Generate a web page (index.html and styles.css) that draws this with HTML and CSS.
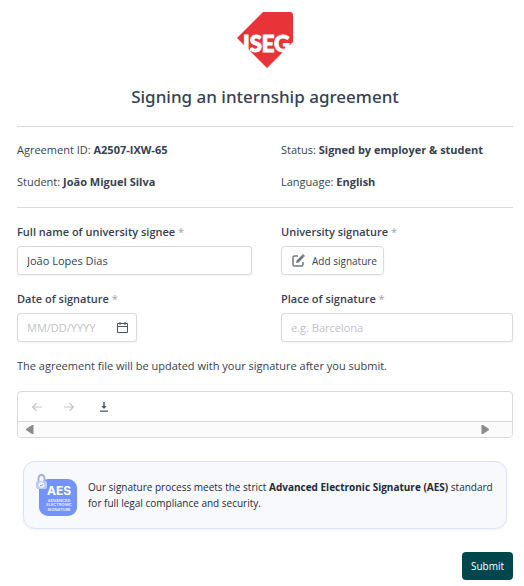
FILE: index.html
```html
<!DOCTYPE html>
<html lang="en">
<head>
<meta charset="UTF-8">
<meta name="viewport" content="width=device-width, initial-scale=1.0">
<title>Signing an internship agreement</title>
<link rel="stylesheet" href="styles.css">
</head>
<body>
    <form class="page">
        <svg class="logo" viewBox="0 0 56 56" role="img" aria-label="ISEG">
            <path d="M26 0H53Q56 0 56 3V30L30 56L0 26Z" fill="#e83338"/>
            <text x="6" y="40" class="logo-text">ISEG</text>
        </svg>
        <h1>Signing an internship agreement</h1>

        <div class="grid details">
            <div>Agreement ID: <strong>A2507-IXW-65</strong></div>
            <div>Status: <strong>Signed by employer &amp; student</strong></div>
            <div>Student: <strong>João Miguel Silva</strong></div>
            <div>Language: <strong>English</strong></div>
        </div>

        <div class="grid fields">
            <div class="field">
                <label for="fullName">Full name of university signee <span class="required">*</span></label>
                <input type="text" id="fullName" value="João Lopes Dias">
            </div>
            <div class="field">
                <label for="addSignature">University signature <span class="required">*</span></label>
                <button type="button" class="add-button" id="addSignature">
                    <svg width="13" height="13" viewBox="0 0 13 13" fill="none">
                        <path d="M6 2H2.500Q1 2 1 3.500V10.500Q1 12 2.500 12H9.500Q11 12 11 10.500V8" stroke="#717784" stroke-width="1.500"/>
                        <path d="M4 9L4.600 6.400L10 1L12 3L6.600 8.400Z" fill="#717784"/>
                        <path d="M10.500 0.500L12.500 2.500" stroke="#717784" stroke-width="1.500"/>
                    </svg>
                    Add signature
                </button>
            </div>
            <div class="field">
                <label for="signDate">Date of signature <span class="required">*</span></label>
                <div class="date-box">
                    <input type="text" id="signDate" placeholder="MM/DD/YYYY">
                    <svg width="11" height="11" viewBox="0 0 11 11" fill="none" stroke="#4b5563">
                        <path d="M0.500 1.500H10.500V10.500H0.500ZM0.500 4.500H10.500M3 0V3M8 0V3"/>
                    </svg>
                </div>
            </div>
            <div class="field">
                <label for="place">Place of signature <span class="required">*</span></label>
                <input type="text" id="place" placeholder="e.g. Barcelona">
            </div>
        </div>

        <p class="note">The agreement file will be updated with your signature after you submit.</p>

        <div class="viewer">
            <div class="toolbar">
                <button type="button" aria-label="Previous page" disabled>
                    <svg width="10" height="10" viewBox="0 0 10 10" fill="none" stroke="#c3c6cb" stroke-width="1.200">
                        <path d="M10 5H1M4.500 1.200L0.700 5L4.500 8.800"/>
                    </svg>
                </button>
                <button type="button" aria-label="Next page" disabled>
                    <svg width="10" height="10" viewBox="0 0 10 10" fill="none" stroke="#c3c6cb" stroke-width="1.200">
                        <path d="M0 5H9M5.500 1.200L9.300 5L5.500 8.800"/>
                    </svg>
                </button>
                <button type="button" aria-label="Download">
                    <svg width="10" height="10" viewBox="0 0 10 10">
                        <path d="M4.300 0H5.700V4H7.500L5 7L2.500 4H4.300Z" fill="#4b5563"/>
                        <path d="M1 8.500H9V10H1Z" fill="#6b7280"/>
                    </svg>
                </button>
            </div>
            <div class="scrollbar">
                <svg width="8" height="9" viewBox="0 0 8 9"><path d="M7.500 0V9H6L0 5V4L6 0Z" fill="#8b8b8b"/></svg>
                <svg width="8" height="9" viewBox="0 0 8 9"><path d="M0.500 0V9H2L8 5V4L2 0Z" fill="#8b8b8b"/></svg>
            </div>
        </div>

        <div class="aes-card">
            <svg class="aes-icon" viewBox="0 0 41 42" role="img" aria-label="Advanced Electronic Signature">
                <rect x="3" y="5" width="38" height="37" rx="9" fill="#7393fb"/>
                <text x="23" y="21" class="aes-title">AES</text>
                <text x="23" y="28" class="aes-small">ADVANCED</text>
                <text x="23" y="32" class="aes-small">ELECTRONIC</text>
                <text x="23" y="37" class="aes-small">SIGNATURE</text>
                <path d="M2.500 8V5Q2.500 1 5.500 1Q8.500 1 8.500 5V8" fill="none" stroke="#a5aae6" stroke-width="1.800"/>
                <rect x="0" y="7" width="11" height="8" rx="2" fill="#c3c7f3"/>
                <circle cx="5.500" cy="11" r="2.800" fill="#f3f8ff"/>
                <path d="M4 11L5.200 12.200L7.200 10" fill="none" stroke="#59aaf0" stroke-width="1"/>
            </svg>
            <p>Our signature process meets the strict <strong>Advanced Electronic Signature (AES)</strong> standard for full legal compliance and security.</p>
        </div>

        <div class="actions">
            <button type="submit" class="submit">Submit</button>
        </div>
    </form>
</body>
</html>
```
FILE: styles.css
```css
* {
    box-sizing: border-box;
}
body {
    margin: 0;
    background: #fff;
    color: #374151;
    font-family: "Open Sans", "Noto Sans", sans-serif;
    font-size: 11px;
    line-height: 16px;
}
.page {
    padding: 12px 11px 6px 17px;
}
.logo {
    display: block;
    width: 56px;
    height: 56px;
    margin: 0 auto;
}
.logo-text {
    font-family: Lato, sans-serif;
    font-size: 22px;
    font-weight: 900;
    fill: #fff;
    stroke: #fff;
    stroke-width: 1px;
}
h1 {
    margin: 17px 0;
    font-family: "Noto Sans", sans-serif;
    font-size: 17px;
    font-weight: 500;
    line-height: 24px;
    text-align: center;
}
strong {
    font-weight: 700;
}
.grid {
    display: grid;
    grid-template-columns: 235fr 232fr;
    column-gap: 29px;
}
.details {
    row-gap: 16px;
    padding: 15px 0 17px;
    border-top: 1px solid #d9dadc;
    border-bottom: 1px solid #d9dadc;
}
.fields {
    row-gap: 16px;
    padding: 16px 0;
}
.field label {
    display: block;
    margin-bottom: 6px;
    font-weight: 600;
}
.required {
    color: #9ca3af;
    font-weight: 400;
}
input, button {
    font: inherit;
    color: inherit;
}
.field > input, .date-box, .add-button {
    height: 29px;
    background: #fff;
    border: 1px solid #d9dadc;
    border-radius: 3px;
    box-shadow: 0 1px 2px rgba(0,0,0,0.05);
}
.field > input {
    display: block;
    width: 100%;
    padding: 0 9px;
}
input::placeholder {
    color: #bfc2c7;
    opacity: 1;
}
.add-button {
    display: flex;
    align-items: center;
    gap: 7px;
    padding: 0 6px 0 10px;
    border-radius: 4px;
    font-size: 10px;
}
.date-box {
    display: flex;
    align-items: center;
    justify-content: space-between;
    width: 120px;
    padding: 0 8px 0 9px;
}
.date-box input {
    width: 84px;
    padding: 0;
    border: none;
    background: none;
}
.note {
    margin: 0 0 17px;
}
.viewer {
    border: 1px solid #d9dadc;
    border-radius: 4px;
    overflow: hidden;
}
.toolbar {
    display: flex;
    align-items: center;
    height: 30px;
    padding: 0 14px;
    border-bottom: 1px solid #d9dadc;
}
.toolbar button {
    display: flex;
    padding: 0;
    background: none;
    border: none;
}
.toolbar button + button {
    margin-left: 22px;
}
.toolbar button:last-child {
    margin-left: 25px;
}
.scrollbar {
    display: flex;
    align-items: center;
    justify-content: space-between;
    height: 15px;
    padding: 0 23px 0 8px;
    background: #fbfbfb;
}
.aes-card {
    display: flex;
    align-items: center;
    gap: 11px;
    margin: 23px 6px;
    padding: 12px;
    background: #f7f9fd;
    border: 1px solid #dde2f2;
    border-radius: 12px;
    box-shadow: 0 1px 3px rgba(0,0,0,0.05);
}
.aes-card p {
    flex: 1;
    margin: 0;
    color: #1f2937;
    font-size: 10px;
}
.aes-icon {
    flex: none;
    width: 41px;
    height: 42px;
}
.aes-title {
    font-family: Inter, sans-serif;
    font-size: 12px;
    font-weight: 700;
    fill: #fff;
    text-anchor: middle;
}
.aes-small {
    font-family: Inter, sans-serif;
    font-size: 4px;
    font-weight: 700;
    fill: #e4eaff;
    text-anchor: middle;
}
.actions {
    display: flex;
    justify-content: flex-end;
}
.submit {
    height: 28px;
    padding: 0 9px;
    background: #00474d;
    border: none;
    border-radius: 4px;
    color: #fff;
    font-size: 10px;
}
```
